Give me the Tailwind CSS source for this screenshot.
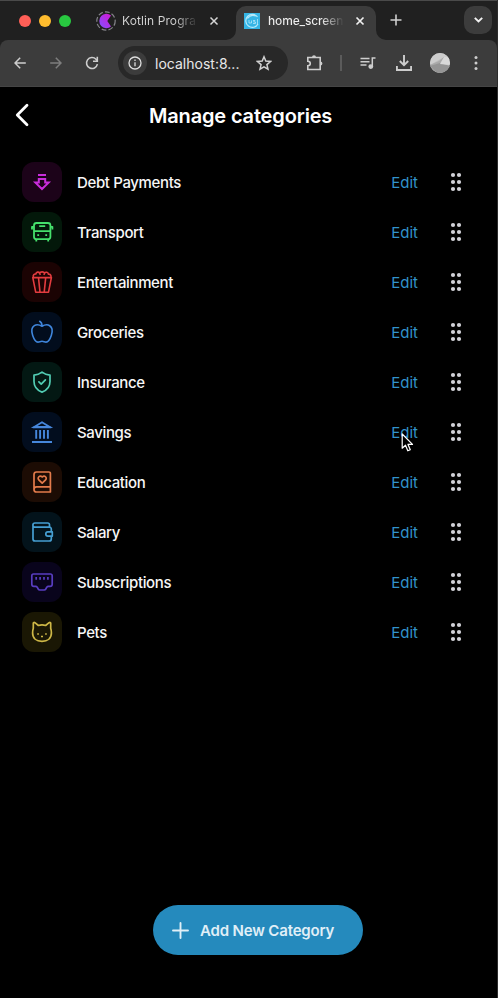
<!DOCTYPE html>
<html lang="en">
<head>
<meta charset="utf-8">
<title>Manage categories</title>
<script src="https://cdn.jsdelivr.net/npm/@tailwindcss/browser@4"></script>
</head>
<body class="bg-black">
<div class="relative flex h-[998px] w-[498px] flex-col overflow-hidden border-r border-[#2c2c2c] bg-black font-['Inter','Liberation_Sans',sans-serif] text-white">

  <!-- Tab strip -->
  <header class="flex h-10 shrink-0 border-t border-[#4a4a4a] bg-[#202020]">
    <div class="flex w-[96px] items-center gap-2 pl-[19px]">
      <span class="size-3 rounded-full bg-[#ff5f57]"></span>
      <span class="size-3 rounded-full bg-[#febc2e]"></span>
      <span class="size-3 rounded-full bg-[#28c840]"></span>
    </div>
    <div class="flex w-[130px] items-center">
      <svg class="size-[20px] shrink-0" viewBox="0 0 20 20" fill="none">
        <defs><linearGradient id="k" x1="0" y1="1" x2="1" y2="0"><stop stop-color="#7f52ff"/><stop offset="1" stop-color="#d815d4"/></linearGradient></defs>
        <circle cx="10" cy="10" r="9.200" stroke="#85858a" stroke-width="1.200" stroke-dasharray="4.800 2.200"/>
        <path d="M15 4.400A7.200 7.200 0 1 0 15 15.600L11.300 10z" fill="url(#k)"/>
      </svg>
      <span class="ml-[6px] w-[76px] overflow-hidden bg-gradient-to-r from-[#d6d6d6] from-70% to-transparent bg-clip-text text-[12px] tracking-[0.1px] whitespace-nowrap text-transparent">Kotlin Progra</span>
      <svg class="ml-[11px] size-[10px]" viewBox="0 0 10 10" stroke="#d6d6d6" stroke-width="1.500"><path d="M1.500 1.500l7 7M8.500 1.500l-7 7"/></svg>
    </div>
    <svg class="mt-[29px] size-[10px]" viewBox="0 0 10 10"><path d="M10 0v10H0A10 10 0 0 0 10 0z" fill="#3c3c3c"/></svg>
    <div class="mt-[5px] flex w-[140px] items-center rounded-t-[10px] bg-[#3c3c3c] pb-[5px] pl-[8px]">
      <svg class="size-4 shrink-0" viewBox="0 0 16 16"><rect width="16" height="16" fill="#35b5e5"/><path d="M13.500 4a6.500 6.500 0 1 0 .5 7M3.500 5.500A7 7 0 0 1 12 3" stroke="#b5e9fa" stroke-width="1.200" fill="none"/><path d="M5 7v3h2.500V7.500M9 7.500h2L9.500 9h2v1.500H9M13.500 6v5" stroke="#b5e9fa" stroke-width=".8" fill="none"/></svg>
      <span class="ml-[8px] w-[76px] overflow-hidden bg-gradient-to-r from-[#eeeeee] from-70% to-transparent bg-clip-text text-[12px] font-medium tracking-[-0.15px] whitespace-nowrap text-transparent">home_screen</span>
      <svg class="ml-[11px] size-[10px]" viewBox="0 0 10 10" stroke="#f0f0f0" stroke-width="1.700"><path d="M1.500 1.500l7 7M8.500 1.500l-7 7"/></svg>
    </div>
    <svg class="mt-[29px] size-[10px]" viewBox="0 0 10 10"><path d="M0 0v10h10A10 10 0 0 1 0 0z" fill="#3c3c3c"/></svg>
    <svg class="mt-[13px] ml-[4px] size-3" viewBox="0 0 12 12" stroke="#cfcfcf" stroke-width="1.600"><path d="M6 .5v11M.5 6h11"/></svg>
    <div class="mt-[5px] ml-[62px] flex size-[28px] items-center justify-center rounded-[10px] bg-[#3c3c3c]">
      <svg class="h-[6px] w-[9px]" viewBox="0 0 9 6" fill="none" stroke="#f2f2f2" stroke-width="1.900"><path d="M.8.8l3.700 3.700L8.200.8"/></svg>
    </div>
  </header>

  <!-- Toolbar -->
  <div class="shrink-0 bg-[#202020]">
  <nav class="flex h-[47px] items-center rounded-t-[8px] border-b border-[#454545] bg-[#3c3c3c] pl-[14px]">
    <svg class="size-3" viewBox="0 0 12 12" fill="none" stroke="#cecece" stroke-width="1.500"><path d="M11.800 6H1M6.200.8L1 6l5.200 5.200"/></svg>
    <svg class="ml-[24px] size-3" viewBox="0 0 12 12" fill="none" stroke="#7e7e7e" stroke-width="1.500"><path d="M.2 6H11M5.800.8L11 6l-5.200 5.200"/></svg>
    <svg class="ml-[23px] size-[14px]" viewBox="0 0 14 14" fill="none" stroke="#cecece" stroke-width="1.600"><path d="M12.400 8.200A5.500 5.500 0 1 1 11 3.200l1.200 1.400"/><path d="M12.300.8v4.400H8"/></svg>
    <div class="ml-[19px] flex h-[34px] w-[170px] items-center rounded-full bg-[#282828] pl-[5px]">
      <span class="flex size-6 items-center justify-center rounded-full bg-[#3c3c3c]">
        <svg class="size-[14px]" viewBox="0 0 14 14" fill="none" stroke="#dedede" stroke-width="1.300"><circle cx="7" cy="7" r="6"/><path d="M7 6.200v4M7 3.600v1.400"/></svg>
      </span>
      <span class="ml-[8px] w-[86px] text-[14px] tracking-[0.01px] whitespace-nowrap text-[#e8e8e8]">localhost:8...</span>
      <svg class="ml-[15px] size-4" viewBox="0 0 16 16" fill="none" stroke="#d0d0d0" stroke-width="1.500"><path d="M8 1.800l1.800 4.300 4.700.4-3.600 3.100 1.100 4.600L8 11.800l-4 2.400 1.100-4.600L1.500 6.500l4.700-.4z"/></svg>
    </div>
    <svg class="ml-[18px] size-[18px]" viewBox="0 0 18 18" fill="none" stroke="#cecece" stroke-width="1.600"><path d="M1.800 3.500h12.400v12H1.800v-3.700c3.300-.2 3.300-4.300 0-4.500z"/><path d="M6 3.300a2 2 0 0 1 4 0zM14.400 7.500a2 2 0 0 1 0 4z" fill="#cecece" stroke="none"/></svg>
    <span class="ml-[16px] h-4 w-[2px] bg-[#5b5b5b]"></span>
    <svg class="ml-[18px] size-[16px]" viewBox="0 0 16 16" fill="none" stroke="#cecece" stroke-width="1.500"><path d="M.5 3.500h9M.5 6.700h9M.5 10h6M15.500 3h-3.200v8.500"/><circle cx="10.800" cy="11.600" r="1.700" fill="#cecece"/></svg>
    <svg class="ml-[20px] size-[16px]" viewBox="0 0 16 16" fill="none" stroke="#cecece" stroke-width="1.900"><path d="M8 0v10M3.800 6L8 10.200 12.200 6M.9 11v4h14.200v-4"/></svg>
    <svg class="ml-[18px] size-5" viewBox="0 0 20 20"><defs><clipPath id="a"><circle cx="10" cy="10" r="10"/></clipPath></defs><g clip-path="url(#a)"><rect width="20" height="20" fill="#bdbdbd"/><path d="M0 12L14 4l6 3V0H0z" fill="#cdcdcd"/><path d="M0 12l9-4 5-4-4 8 3 8H0z" fill="#aaa"/><path d="M0 13l10-3 10 3v7H7z" fill="#959595"/><path d="M14 4l-4 7 10 1V4z" fill="#d9d9d9"/></g></svg>
    <svg class="ml-[24px] h-4 w-1" viewBox="0 0 4 16" fill="#cecece"><circle cx="2" cy="2.500" r="1.500"/><circle cx="2" cy="8" r="1.500"/><circle cx="2" cy="13.500" r="1.500"/></svg>
  </nav>
  </div>

  <!-- Page header -->
  <div class="flex h-[56px] shrink-0 items-center pl-[15px]">
    <svg class="h-6 w-[14px]" viewBox="0 0 14 24" fill="none" stroke="#fff" stroke-width="2.800" stroke-linecap="round" stroke-linejoin="round"><path d="M12 2.300L2.300 12l9.700 9.700"/></svg>
    <h1 class="ml-[120px] pt-[2px] text-[20px] font-semibold tracking-[-0.16px] whitespace-nowrap">Manage categories</h1>
  </div>

  <!-- Category list -->
  <ul id="list" class="mt-[19px] flex flex-col gap-[10px] pr-[35px] pl-[22px]">
    <li class="flex h-10 items-center">
      <span class="size-10 rounded-[12px] bg-[#1c0319]"><svg class="size-10" viewBox="0 0 40 40" fill="none" stroke="#c92ddb" stroke-width="2"><path d="M16 13h8M16.800 17h6.400v3.600h3.400L20 27l-6.600-6.400h3.400z"/></svg></span>
      <span class="name">Debt Payments</span>
    </li>
    <li class="flex h-10 items-center">
      <span class="size-10 rounded-[12px] bg-[#03180a]"><svg class="size-10" viewBox="0 0 40 40" fill="none" stroke="#45e06c" stroke-width="1.800" stroke-linejoin="round"><rect x="12" y="11" width="16.400" height="16.200" rx="2.500"/><path d="M12 19.200h16.400M17.200 14.200h6M10 17.500v-2.700h2M30.400 17.500v-2.700h-2M14.300 27v2.600M26.200 27v2.600M15.300 23.200h1.800M23.300 23.200h1.800"/></svg></span>
      <span class="name">Transport</span>
    </li>
    <li class="flex h-10 items-center">
      <span class="size-10 rounded-[12px] bg-[#1b0303]"><svg class="size-10" viewBox="0 0 40 40" fill="none" stroke="#e23c3f" stroke-width="1.600" stroke-linejoin="round"><path d="M10.800 15.600h18.600l-2.900 14.600H13.700zM16.500 15.600l1.500 14.600M23.700 15.600l-1.500 14.600"/><path d="M11.500 15.300c-1-2 .8-3.600 2.300-3.200.2-2.300 3-2.600 3.800-1 .8-1.600 4.200-1.600 5 0 1-1.500 3.700-1 3.800 1 1.700-.2 3.300 1.300 2.400 3.200M17.600 11.300l.8 1.500M22.600 11.300l-.8 1.500"/></svg></span>
      <span class="name">Entertainment</span>
    </li>
    <li class="flex h-10 items-center">
      <span class="size-10 rounded-[12px] bg-[#020d1d]"><svg class="size-10" viewBox="0 0 40 40" fill="none" stroke="#3f86dc" stroke-width="1.600" stroke-linecap="round" stroke-linejoin="round"><path d="M20 14.300c-2.500-1.500-5.500-2-7.700-.6-3 1.900-2.700 6.500-1.600 9.800 1 3 2.800 6.600 5.300 6.600 1.400 0 2.400-.8 4-.8s2.600.8 4 .8c2.500 0 4.300-3.600 5.300-6.600 1.100-3.300 1.400-7.900-1.600-9.800-2.200-1.400-5.200-.9-7.700.6zM20 14c0-2-.7-3.800-2.300-4.700"/></svg></span>
      <span class="name">Groceries</span>
    </li>
    <li class="flex h-10 items-center">
      <span class="size-10 rounded-[12px] bg-[#031813]"><svg class="size-10" viewBox="0 0 40 40" fill="none" stroke="#52cdb4" stroke-width="1.700" stroke-linecap="round" stroke-linejoin="round"><path d="M20 10.200c-2.200 1.700-5 2.700-8 2.900v6.400c0 5 3.200 8.800 8 10.600 4.800-1.800 8-5.600 8-10.600v-6.400c-3-.2-5.800-1.200-8-2.900zM16.900 19.900l2.300 2.300 4.200-4.400"/></svg></span>
      <span class="name">Insurance</span>
    </li>
    <li class="flex h-10 items-center">
      <span class="size-10 rounded-[12px] bg-[#020d1e]"><svg class="size-10" viewBox="0 0 40 40" fill="none" stroke="#4687dc" stroke-width="1.900"><path d="M12.200 15L20 10.300 27.800 15zM10.800 15.200h18.400M14.200 18v8.700M18.100 18v8.700M22 18v8.700M25.900 18v8.700M10 30h20"/></svg></span>
      <span class="name">Savings</span>
    </li>
    <li class="flex h-10 items-center">
      <span class="size-10 rounded-[12px] bg-[#1c0c04]"><svg class="size-10" viewBox="0 0 40 40" fill="none" stroke="#e27b4b" stroke-width="1.700" stroke-linejoin="round"><path d="M28.400 24.800V11.500a1.500 1.500 0 0 0-1.500-1.500H14.500a2.500 2.500 0 0 0-2.500 2.500v15a2.500 2.500 0 0 0 2.500 2.500h13.900v-5.200H14.500a2.500 2.500 0 0 0-2.500 2.500"/><path d="M20.200 21.200l-3.400-3.400c-2-2 1-5.200 3.400-2.800 2.400-2.400 5.400.8 3.400 2.800z"/></svg></span>
      <span class="name">Education</span>
    </li>
    <li class="flex h-10 items-center">
      <span class="size-10 rounded-[12px] bg-[#03131b]"><svg class="size-10" viewBox="0 0 40 40" fill="none" stroke="#469fd2" stroke-width="1.700" stroke-linejoin="round"><path d="M27.500 15v-2.300a1.700 1.700 0 0 0-1.700-1.700H13a2 2 0 0 0 0 4.200h14.500a1.800 1.800 0 0 1 1.800 1.800v2.800M29.300 24v3a2 2 0 0 1-2 2H13a2 2 0 0 1-2-2V13"/><path d="M30.300 19.900h-4.400a2.100 2.100 0 0 0 0 4.200h4.400z"/></svg></span>
      <span class="name">Salary</span>
    </li>
    <li class="flex h-10 items-center">
      <span class="size-10 rounded-[12px] bg-[#09041c]"><svg class="size-10" viewBox="0 0 40 40" fill="none" stroke="#583dc0" stroke-width="1.700" stroke-linejoin="round"><path d="M11.500 12h17a1.700 1.700 0 0 1 1.700 1.700v8.500a2.200 2.200 0 0 1-2.200 2.200h-1.700a2 2 0 0 0-1.500.8l-1 1.800a2 2 0 0 1-1.700 1h-4.200a2 2 0 0 1-1.700-1l-1-1.800a2 2 0 0 0-1.500-.8H12a2.200 2.200 0 0 1-2.200-2.200v-8.500A1.700 1.700 0 0 1 11.500 12zM14.200 15v2.700M18.100 15v2.700M22 15v2.700M25.900 15v2.700"/></svg></span>
      <span class="name">Subscriptions</span>
    </li>
    <li class="flex h-10 items-center">
      <span class="size-10 rounded-[12px] bg-[#1a1704]"><svg class="size-10" viewBox="0 0 40 40" fill="none" stroke="#cdb746" stroke-width="1.700" stroke-linejoin="round"><path d="M11.300 11.300c0-.9.900-1.100 1.600-.6l3.500 2.800c2.300-.7 4.900-.7 7.200 0l3.500-2.800c.7-.5 1.600-.3 1.600.6v5c.5 1.500.7 3.200.7 4.700 0 5.200-3.800 8.300-9.400 8.300s-9.400-3.100-9.400-8.300c0-1.500.2-3.200.7-4.700z"/><path d="M15.200 22h1.700M23.100 22h1.700M19 24.500h2"/></svg></span>
      <span class="name">Pets</span>
    </li>
  </ul>

  <!-- Primary action -->
  <button class="mt-auto mb-[43px] ml-[153px] flex h-[50px] w-[210px] shrink-0 items-center rounded-full bg-[#258abd] pl-[19px] text-[#e0eff7]">
    <svg class="size-[17px]" viewBox="0 0 17 17" fill="none" stroke="currentColor" stroke-width="1.900" stroke-linecap="round"><path d="M8.500 1v15M1 8.500h15"/></svg>
    <span class="ml-[11px] pt-[2px] text-[15px] font-semibold tracking-[-0.16px] whitespace-nowrap">Add New Category</span>
  </button>

  <!-- Pointer -->
  <svg class="absolute top-[433px] left-[401px] h-[20px] w-[13px]" viewBox="0 0 13 20"><path d="M1.200 1v14.200l3.300-3 2.300 5.600 2.500-1-2.300-5.400h4.500z" fill="#000" stroke="#fff" stroke-width="1.200" stroke-linejoin="round"/></svg>
</div>

<template id="actions">
  <a class="ml-auto pt-[2px] text-[15px] text-[#3293cb]">Edit</a>
  <svg class="ml-[32px] h-5 w-3" viewBox="0 0 12 20" fill="#d2d2d8"><circle cx="3" cy="3" r="2.100"/><circle cx="9" cy="3" r="2.100"/><circle cx="3" cy="10" r="2.100"/><circle cx="9" cy="10" r="2.100"/><circle cx="3" cy="17" r="2.100"/><circle cx="9" cy="17" r="2.100"/></svg>
</template>
<script>
  for (const row of document.querySelectorAll('#list li')) {
    row.querySelector('.name').className = 'ml-[15px] pt-[2px] text-[15px] font-medium tracking-[-0.36px] whitespace-nowrap text-[#f7f7f7]';
    row.append(document.getElementById('actions').content.cloneNode(true));
  }
</script>
</body>
</html>
